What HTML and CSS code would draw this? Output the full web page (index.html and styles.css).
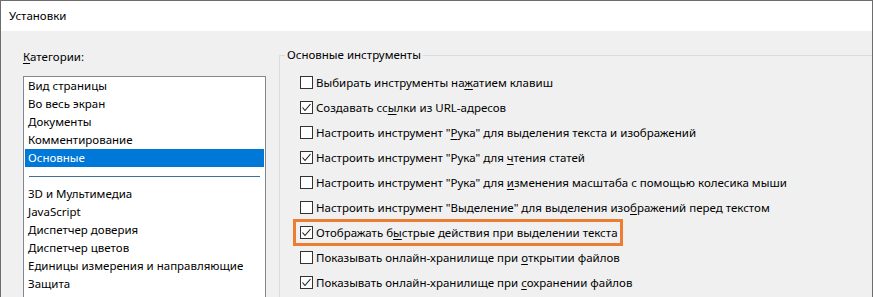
FILE: index.html
```html
<!DOCTYPE html>
<html lang="ru">
<head>
<meta charset="utf-8">
<title>Установки</title>
<link rel="stylesheet" href="styles.css">
</head>
<body>
<div class="window">
  <div class="titlebar">Установки</div>
  <div class="content">
    <div class="left">
      <div class="cat-label"><u>К</u>атегории:</div>
      <div class="listbox">
        <div class="item">Вид страницы</div>
        <div class="item">Во весь экран</div>
        <div class="item">Документы</div>
        <div class="item">Комментирование</div>
        <div class="item selected">Основные</div>
        <div class="sep"><div class="sep-line"></div></div>
        <div class="item">3D и Мультимедиа</div>
        <div class="item">JavaScript</div>
        <div class="item">Диспетчер доверия</div>
        <div class="item">Диспетчер цветов</div>
        <div class="item">Единицы измерения и направляющие</div>
        <div class="item">Защита</div>
      </div>
    </div>
    <fieldset class="group">
      <legend class="legend">Основные инструменты</legend>
      <div class="rows">
        <div class="row"><span class="cb"></span><span class="txt">Выбирать инструменты на<u>ж</u>атием клавиш</span></div>
        <div class="row"><span class="cb checked"><svg viewBox="0 0 11 11" width="11" height="11"><polyline points="1.5,5.5 4,8.5 9.5,2" fill="none" stroke="#1a1a1a" stroke-width="1.1"/></svg></span><span class="txt">Создавать сс<u>ы</u>лки из URL-адресов</span></div>
        <div class="row"><span class="cb"></span><span class="txt">Настроить инструмент "<u>Р</u>ука" для выделения текста и изображений</span></div>
        <div class="row"><span class="cb checked"><svg viewBox="0 0 11 11" width="11" height="11"><polyline points="1.5,5.5 4,8.5 9.5,2" fill="none" stroke="#1a1a1a" stroke-width="1.1"/></svg></span><span class="txt">Настроить инструмент "Рука" для <u>ч</u>тения статей</span></div>
        <div class="row"><span class="cb"></span><span class="txt">Настроить инструмент "Рука" для <u>и</u>зменения масштаба с помощью колесика мыши</span></div>
        <div class="row"><span class="cb"></span><span class="txt">Настроить инструмент "Выделение" для выделения изо<u>б</u>ражений перед текстом</span></div>
        <div class="row highlight"><span class="cb checked"><svg viewBox="0 0 11 11" width="11" height="11"><polyline points="1.5,5.5 4,8.5 9.5,2" fill="none" stroke="#1a1a1a" stroke-width="1.1"/></svg></span><span class="txt">Отображать б<u>ы</u>стрые действия при выделении текста</span></div>
        <div class="row"><span class="cb"></span><span class="txt">Показывать онлайн-хранилище при <u>о</u>ткрытии файлов</span></div>
        <div class="row"><span class="cb checked"><svg viewBox="0 0 11 11" width="11" height="11"><polyline points="1.5,5.5 4,8.5 9.5,2" fill="none" stroke="#1a1a1a" stroke-width="1.1"/></svg></span><span class="txt">Показывать онлайн-хранилище при <u>с</u>охранении файлов</span></div>
      </div>
    </fieldset>
  </div>
</div>
</body>
</html>
```

FILE: styles.css
```css
html, body {
  margin: 0;
  padding: 0;
}
body {
  width: 873px;
  height: 297px;
  overflow: hidden;
  font-family: "Noto Sans", "Open Sans", sans-serif;
  font-size: 11.5px;
  color: #000;
}
u {
  text-decoration-thickness: 1px;
  text-underline-offset: 2px;
}
.window {
  box-sizing: border-box;
  width: 873px;
  height: 297px;
  border: 1px solid #6d6d6d;
  border-bottom: none;
  display: flex;
  flex-direction: column;
  overflow: hidden;
}
.titlebar {
  height: 30px;
  line-height: 30px;
  padding-left: 8px;
  background: #fff;
  flex: none;
}
.content {
  flex: 1;
  background: #f0f0f0;
  display: flex;
  align-items: flex-start;
  padding-left: 22px;
  overflow: hidden;
}
.left {
  flex: none;
  width: 243px;
}
.cat-label {
  margin-top: 18px;
  line-height: 16px;
  margin-bottom: 11px;
}
.listbox {
  box-sizing: border-box;
  width: 243px;
  height: 300px;
  background: #fff;
  border: 1px solid #828790;
  padding: 0 1px;
}
.item {
  height: 18px;
  line-height: 18px;
  padding-left: 3px;
  white-space: nowrap;
}
.item.selected {
  background: #0078d7;
  color: #fff;
}
.sep {
  height: 18px;
  display: flex;
  align-items: center;
  padding: 0 4px;
}
.sep-line {
  flex: 1;
  height: 1px;
  margin-top: 1px;
  background: #3f6f9c;
}
.group {
  flex: 1;
  margin: 16px -20px 0 13px;
  padding: 7px 0 0 0;
  border: 1px solid #dcdcdc;
  min-width: 0;
  height: 400px;
}
.legend {
  margin-left: 5px;
  padding: 0 2px;
  line-height: 16px;
}
.rows {
  padding-left: 20px;
}
.row {
  height: 25px;
  display: flex;
  align-items: center;
  white-space: nowrap;
}
.cb {
  box-sizing: border-box;
  width: 13px;
  height: 13px;
  border: 1px solid #333;
  background: #fff;
  flex: none;
  margin-right: 3px;
  display: flex;
  align-items: center;
  justify-content: center;
}
.cb svg {
  display: block;
}
.row.highlight {
  width: fit-content;
  margin-left: -6px;
  padding-left: 6px;
  padding-right: 4px;
  outline: 3px solid #ed7d31;
  outline-offset: -2px;
}
```
